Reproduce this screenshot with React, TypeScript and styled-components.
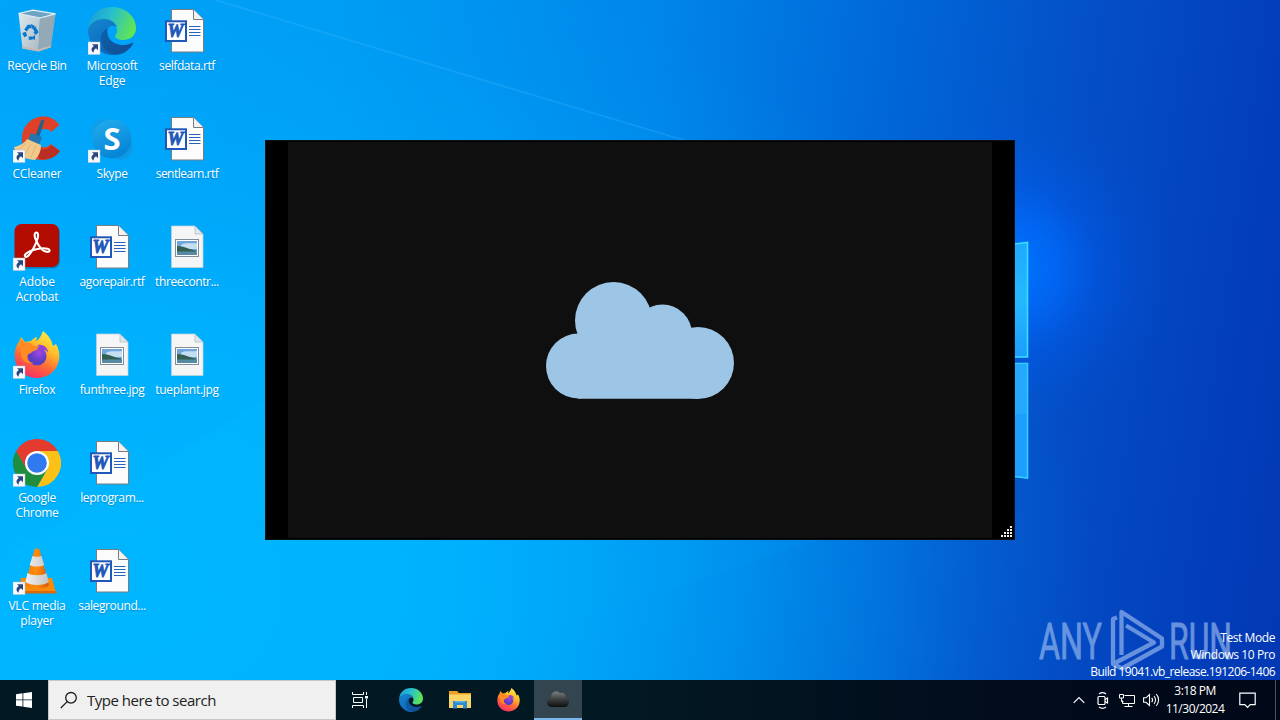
import type { ReactNode } from "react";
import styled, { createGlobalStyle } from "styled-components";

const GlobalStyle = createGlobalStyle`
  * {
    box-sizing: border-box;
  }
  body {
    margin: 0;
    overflow: hidden;
    font-family: "Open Sans", "Noto Sans", sans-serif;
  }
  svg {
    display: block;
    flex-shrink: 0;
  }
`;

const Screen = styled.div`
  position: relative;
  width: 1280px;
  height: 720px;
  display: flex;
  flex-direction: column;
  overflow: hidden;
`;

const Desktop = styled.main`
  position: relative;
  flex: 1;
  background:
    radial-gradient(
      ellipse 165px 165px at 1010px 268px,
      rgba(0, 118, 255, 1) 0%,
      rgba(0, 108, 255, 0.75) 28%,
      rgba(0, 98, 250, 0.35) 52%,
      rgba(0, 92, 240, 0.1) 78%,
      rgba(0, 90, 240, 0) 100%
    ),
    radial-gradient(
      ellipse 980px 680px at 120px 590px,
      #00b7ff 0%,
      rgba(0, 181, 255, 0.92) 32%,
      rgba(0, 174, 252, 0.5) 62%,
      rgba(0, 165, 245, 0.14) 86%,
      rgba(0, 160, 240, 0) 100%
    ),
    linear-gradient(98deg, #00a4fa 0%, #009cf4 25%, #0086ea 48%, #0068d8 65%, #0450c8 79%, #0340bc 92%, #0338b4 100%);
`;

const Wallpaper = styled.svg`
  position: absolute;
  inset: 0;
`;

const IconGrid = styled.ul`
  position: relative;
  display: grid;
  grid-auto-flow: column;
  grid-template-rows: repeat(6, 108px);
  grid-auto-columns: 75px;
  margin: 0;
  padding: 0;
  width: 225px;
  list-style: none;
`;

const Shortcut = styled.li`
  display: flex;
  flex-direction: column;
  align-items: center;
  padding: 7px 1px 0 0;
`;

const Label = styled.span<{ $spacing: number }>`
  margin-top: 3px;
  font-size: 12px;
  line-height: 15px;
  letter-spacing: ${(props) => props.$spacing}px;
  color: #fff;
  text-align: center;
  white-space: pre;
  text-shadow: 0 1px 1px rgba(0, 60, 120, 0.35);
`;

const Window = styled.section`
  position: absolute;
  left: 265px;
  top: 140px;
  width: 750px;
  height: 400px;
  padding: 1px 22px;
  background: #000;
  border: 1px solid #0c1216;
`;

const WindowBody = styled.div`
  height: 100%;
  display: flex;
  align-items: center;
  justify-content: center;
  background: #0f0f0f;
`;

const Grip = styled.svg`
  position: absolute;
  right: 2px;
  bottom: 2px;
`;

const Watermark = styled.svg`
  position: absolute;
  left: 1036px;
  top: 600px;
`;

const BuildInfo = styled.div`
  position: absolute;
  right: 5px;
  bottom: 0;
  display: flex;
  flex-direction: column;
  align-items: flex-end;
  font-size: 12px;
  line-height: 17px;
  color: #fff;
  white-space: nowrap;
`;

const BuildLine = styled.span<{ $spacing: number }>`
  letter-spacing: ${(props) => props.$spacing}px;
`;

const Taskbar = styled.footer`
  height: 40px;
  display: flex;
  background: linear-gradient(90deg, #021822 0%, #021822 50%, #020c1c 78%, #010818 100%);
`;

const TaskButton = styled.div<{ $active?: boolean; $width: number }>`
  width: ${(props) => props.$width}px;
  height: 40px;
  display: flex;
  align-items: center;
  justify-content: center;
  background: ${(props) => (props.$active ? "#33464f" : "transparent")};
  border-bottom: ${(props) => (props.$active ? "2px solid #79b8ec" : "0")};
`;

const SearchBox = styled.div`
  width: 288px;
  height: 40px;
  display: flex;
  align-items: center;
  gap: 9px;
  padding-left: 11px;
  background: #f0f0f0;
  border: 1px solid #c4c8ca;
  color: #222;
  font-size: 15px;
  letter-spacing: -0.48px;
`;

const Tray = styled.div`
  margin-left: auto;
  display: flex;
  align-items: center;
  color: #fff;
`;

const TrayItem = styled.div`
  width: 24px;
  display: flex;
  justify-content: center;
`;

const Clock = styled.div`
  width: 64px;
  display: flex;
  flex-direction: column;
  align-items: center;
  font-size: 12px;
  line-height: 18px;
  letter-spacing: -0.5px;
  white-space: nowrap;
`;

const Notifications = styled.div`
  width: 49px;
  height: 40px;
  display: flex;
  align-items: center;
  justify-content: center;
  padding-right: 8px;
  border-right: 1px solid #4a5261;
  margin-right: 4px;
`;

const ShortcutArrow = () => (
  <g>
    <rect x="0" y="35" width="12" height="12.5" fill="#f6f8fb" stroke="#b5c3d3" strokeWidth=".5" />
    <path d="M4 37.2h6v6l-2-2c-1.9 1.2-2.6 2.5-2.3 4.6-2.9-1.9-3-4.8.2-6.8z" fill="#28477f" />
  </g>
);

const Icon = ({ children, arrow }: { children: ReactNode; arrow?: boolean }) => (
  <svg width="48" height="48" viewBox="0 0 48 48">
    {children}
    {arrow && <ShortcutArrow />}
  </svg>
);

const RecycleBin = () => (
  <Icon>
    <defs>
      <linearGradient id="bin" x1="0" y1="0" x2="1" y2="1">
        <stop offset="0" stopColor="#dce8ef" />
        <stop offset="1" stopColor="#aeb9c1" />
      </linearGradient>
    </defs>
    <path d="M5.5 6.5 27 11l-1.5 33.500L9.500 41.500z" fill="url(#bin)" />
    <path d="M27 11 42.5 7 38 40l-12.500 4.500z" fill="#93a9b6" />
    <path d="M5.500 6.500 20 3.200l22.500 3.600L27 11z" fill="#6fa3c4" stroke="#e8f2f6" strokeWidth="1.200" />
    <path d="M9.300 39.500l16 2.700L38 38.500 37.800 40.500l-12.300 4-16-3z" fill="#c5b8b2" />
    <g fill="none" stroke="#0878cd" strokeWidth="3.300">
      <path d="M12.500 23.500l3-4h3M20.800 20.200l2.800 4.800-2 1.800M19.500 31.200h-3.800M12.800 29.500l-2.100-3.800" />
    </g>
    <path d="M18 17l4 2-3 3zM22 28l-4 3 4 2zM9 26l4-1 1 4z" fill="#0878cd" />
  </Icon>
);

const EdgeArt = ({ id }: { id: string }) => (
  <>
    <defs>
      <linearGradient id={`${id}a`} x1="0" y1=".2" x2="1" y2=".5">
        <stop offset="0" stopColor="#199bd9" />
        <stop offset=".45" stopColor="#27bfce" />
        <stop offset="1" stopColor="#62e552" />
      </linearGradient>
      <linearGradient id={`${id}b`} x1="0" y1="0" x2=".5" y2="1">
        <stop offset="0" stopColor="#1685cd" />
        <stop offset="1" stopColor="#0b69bd" />
      </linearGradient>
      <linearGradient id={`${id}c`} x1="0" y1="0" x2="1" y2="1">
        <stop offset="0" stopColor="#0c62ae" />
        <stop offset="1" stopColor="#124c91" />
      </linearGradient>
    </defs>
    <path
      d="M0 23C1 9 10 0 24 0c14 0 24 10 24 21 0 7-5 12-13 12-5 0-8-2-8-4 0-1 2-2 2-6 0-5-5-10-13-10C8 13 2 16 0 23z"
      fill={`url(#${id}a)`}
    />
    <path
      d="M0 23c2-7 8-11 16-11 6 0 11 3 13 8-5-3-11 0-12 8-1 9 5 17 14 20-3 .6-7 .4-10-.2C9 45 0 36 0 23z"
      fill={`url(#${id}b)`}
    />
    <path
      d="M20 21c-5 2-8 7-7 13 1 8 8 14 17 13.500C37 46.500 42 42 45 37c.6-1-.3-1.600-1.300-1C36 40 25 38 21 31c-2-4-2-7-1-10z"
      fill={`url(#${id}c)`}
    />
  </>
);

const CCleaner = () => (
  <Icon arrow>
    <path
      d="M46.500 10C42 4 37 1.500 31 1.500 18 1.500 9 11 9 24c0 12 9 21 20 21 7 0 14-3 18-9l-9-7c-3 3-6 4-9 3-4-1-6-4-6-8 0-6 4-10 9-10 3 0 5 1 6 3z"
      fill="#df4128"
    />
    <path d="M23 39l6-5c4 1 7-.5 9-4l9 6c-5 7-12 9-20 8z" fill="#b92f24" />
    <path d="M28.500 4.500l3 1-5.500 17-4-1z" fill="#26618c" />
    <path d="M18 18l11 4-3 8-11-5z" fill="#2676ae" />
    <path d="M14 24c-2 4-8 7-13 8 2 8 10 12 21 13 4-4 6-9 6-15z" fill="#f1c98a" />
    <path d="M13 28l-7 7M18 29l-6 10M23 31l-5 11" stroke="#dfb478" strokeWidth="1" />
  </Icon>
);

const Skype = () => (
  <Icon arrow>
    <defs>
      <linearGradient id="skype" x1="0" y1="0" x2=".4" y2="1">
        <stop offset="0" stopColor="#22aeee" />
        <stop offset="1" stopColor="#0785d6" />
      </linearGradient>
    </defs>
    <circle cx="15" cy="16" r="12" fill="#0f9fe8" />
    <circle cx="33" cy="33" r="11.500" fill="#0c99e6" />
    <circle cx="24" cy="24" r="19.500" fill="url(#skype)" />
    <text x="24" y="35" textAnchor="middle" fontFamily="Open Sans, sans-serif" fontWeight="700" fontSize="31" fill="#fff">
      S
    </text>
  </Icon>
);

const Acrobat = () => (
  <Icon arrow>
    <rect x="2" y="2.500" width="45" height="43" rx="7" fill="#17618f" opacity=".6" />
    <rect x="1.500" y="1" width="44.500" height="43" rx="7" fill="#b30b00" />
    <path
      d="M23.500 9.500c-2.600 0-2.300 4.200-.2 8.500 2.500 5.200 6.300 10.200 10.300 10.800 3.600.5 4-2.300.8-3.100-5.600-1.300-16.600 1.200-21 4.600-3 2.400-.9 5 1.600 2.600 4-4 8.500-12.500 9.800-18.400.5-2.700.3-5-1.300-5z"
      fill="none"
      stroke="#fff"
      strokeWidth="2.100"
    />
  </Icon>
);

const FirefoxArt = ({ id }: { id: string }) => (
  <>
    <defs>
      <linearGradient id={`${id}a`} x1=".8" y1="0" x2=".3" y2="1">
        <stop offset="0" stopColor="#fff04b" />
        <stop offset=".35" stopColor="#ffbd2a" />
        <stop offset=".65" stopColor="#ff6b35" />
        <stop offset="1" stopColor="#f52a69" />
      </linearGradient>
      <radialGradient id={`${id}b`} cx=".6" cy=".3">
        <stop offset="0" stopColor="#a545e2" />
        <stop offset="1" stopColor="#5a3ec5" />
      </radialGradient>
    </defs>
    <path
      d="M30 0c7 5 9 11 10 15l3-2c3 5 4 10 3 16-2 11-11 18-22 18S3 39 2 28C1 21 3 14 6 11l2-5 4 5 6-1c2-2 4-4 6-4l-1 4c3-1 5-5 7-10z"
      fill={`url(#${id}a)`}
    />
    <circle cx="24" cy="25" r="9.500" fill={`url(#${id}b)`} />
    <path d="M8 8l4 4c3-.5 6 0 8 2 2 1 5 1 5 3s-5 3-6 4c-1 2-4 1-5 4-.5 4 3 7 7 7-8 2-13-3-13-9 0-6-3-9 0-15z" fill="#ff8b22" />
    <path d="M24 14c6-1 11 2 11 8-2-3-4-4-7-4-1-2-2-3-4-4z" fill="#9641d6" />
  </>
);

const Chrome = () => (
  <Icon arrow>
    <path d="M24 24 3.200 12A24 24 0 0 1 44.800 12z" fill="#e33b2e" />
    <path d="M24 24V12h20.800A24 24 0 0 1 24 48l10.400-18z" fill="#fbc116" />
    <path d="M24 24l10.400 6L24 48A24 24 0 0 1 3.200 12l10.400 18z" fill="#1e8e3e" />
    <path d="M3.200 12h20.800v12l-10.400 6z" fill="#e33b2e" />
    <circle cx="24" cy="24" r="12" fill="#fff" />
    <circle cx="24" cy="24" r="9.800" fill="#3079ee" />
  </Icon>
);

const Vlc = () => (
  <Icon arrow>
    <defs>
      <linearGradient id="cone">
        <stop offset="0" stopColor="#f77e0a" />
        <stop offset=".5" stopColor="#ff8b0b" />
        <stop offset="1" stopColor="#d35a04" />
      </linearGradient>
      <linearGradient id="band">
        <stop offset="0" stopColor="#f4f2f0" />
        <stop offset="1" stopColor="#c3c3c3" />
      </linearGradient>
    </defs>
    <path d="M8 31h31l4 15H6z" fill="#f98a0a" />
    <path d="M6 44h37.500v2.500H6z" fill="#dc6906" />
    <path d="M21.500 2.500c1-1.500 4-1.500 5 0L36 38c-4 5-20 5-24 0z" fill="url(#cone)" />
    <path d="M19.500 9c2 1 7 1 9 0l2.700 9c-3 2-11 2-14.500 0zM14.500 26c4 3 15 3 19 0l2.300 9c-5 4-18 4-23.500 0z" fill="url(#band)" />
  </Icon>
);

const WordFile = () => (
  <Icon>
    <path d="M8.500 2.500h22l10 10v32.500h-32z" fill="#fcfcfc" stroke="#777d82" />
    <path d="M30.500 2.500v10h10" fill="#f2f2f2" stroke="#777d82" />
    <path d="M26 19.500h11.500M26 22.500h11.500M26 25.500h11.500M26 28.500h11.500" stroke="#2a62b7" />
    <rect x="3" y="14.300" width="20" height="19.700" fill="#fff" stroke="#1f58b8" strokeWidth="2" />
    <text
      x="12.600"
      y="30.300"
      textAnchor="middle"
      fontFamily="Liberation Serif, serif"
      fontStyle="italic"
      fontWeight="700"
      fontSize="18"
      fill="#1f58b8"
      stroke="#1f58b8"
      strokeWidth=".9"
    >
      W
    </text>
  </Icon>
);

const ImageFile = () => (
  <Icon>
    <path d="M8.500 3h23.500l8 8v33.500h-31.500z" fill="#f5f5f5" stroke="#c9d1d6" strokeWidth=".7" />
    <path d="M32 3v8h8z" fill="#dce6eb" stroke="#aab9c2" strokeWidth=".7" />
    <rect x="12.500" y="16.500" width="23" height="17" fill="#fff" stroke="#7f8e98" />
    <rect x="14" y="18" width="20" height="14" fill="#6ea6dd" />
    <path d="M18 22c4-3 10-1 16-2v6H18z" fill="#c4def2" />
    <path d="M14 23c7 0 11 3 19 4.500V29H14z" fill="#335f52" />
    <path d="M14 28.500h20V32H14z" fill="#578aa3" />
  </Icon>
);

const Edge = () => (
  <Icon arrow>
    <EdgeArt id="edge" />
  </Icon>
);

const Firefox = () => (
  <Icon arrow>
    <FirefoxArt id="firefox" />
  </Icon>
);

interface IShortcut {
  label: string;
  icon: () => ReactNode;
  spacing: number;
}

const shortcuts: IShortcut[] = [
  { label: "Recycle Bin", icon: RecycleBin, spacing: -0.3 },
  { label: "CCleaner", icon: CCleaner, spacing: -0.2 },
  { label: "Adobe\nAcrobat", icon: Acrobat, spacing: -0.15 },
  { label: "Firefox", icon: Firefox, spacing: -0.3 },
  { label: "Google\nChrome", icon: Chrome, spacing: -0.3 },
  { label: "VLC media\nplayer", icon: Vlc, spacing: -0.2 },
  { label: "Microsoft\nEdge", icon: Edge, spacing: -0.2 },
  { label: "Skype", icon: Skype, spacing: -0.4 },
  { label: "agorepair.rtf", icon: WordFile, spacing: -0.42 },
  { label: "funthree.jpg", icon: ImageFile, spacing: -0.35 },
  { label: "leprogram...", icon: WordFile, spacing: -0.35 },
  { label: "saleground...", icon: WordFile, spacing: -0.38 },
  { label: "selfdata.rtf", icon: WordFile, spacing: -0.42 },
  { label: "sentlearn.rtf", icon: WordFile, spacing: -0.5 },
  { label: "threecontr...", icon: ImageFile, spacing: -0.4 },
  { label: "tueplant.jpg", icon: ImageFile, spacing: -0.3 },
];

const gripDots = [0, 1, 2, 3].flatMap((row) =>
  [0, 1, 2, 3].filter((col) => col >= 3 - row).map((col) => ({ x: col * 3, y: row * 3 }))
);

function App() {
  return (
    <Screen>
      <GlobalStyle />
      <Desktop>
        <Wallpaper width="1280" height="680" viewBox="0 0 1280 680">
          <defs>
            <linearGradient id="pane" x1="0" y1="0" x2="0" y2="1">
              <stop offset="0" stopColor="#1fa9ff" />
              <stop offset=".5" stopColor="#24b8ff" />
              <stop offset="1" stopColor="#1c9dff" />
            </linearGradient>
          </defs>
          <path d="M205 0 690 143H265V400L0 560V0z" fill="#00aaff" opacity=".08" />
          <path d="M215 0 690 142" stroke="#35b5ff" strokeWidth="1.800" opacity=".35" />
          <path d="M0 546 265 512" stroke="#30c4ff" opacity=".12" />
          <path d="M820 540 640 600 400 680H0V560L265 520V540z" fill="#00b4ff" opacity=".08" />
          <path d="M1000 245.500 1027.500 242.500V357H1000z" fill="url(#pane)" stroke="#3adfff" strokeWidth="1.600" />
          <path d="M1000 363.500h27.500V478l-27.500-3z" fill="#1d9dff" stroke="#37cfff" strokeWidth="1.600" />
          <path d="M1000 416l26.500-2v-49H1000z" fill="#28b2ff" opacity=".6" />
        </Wallpaper>
        <IconGrid>
          {shortcuts.map(({ label, icon: Art, spacing }) => (
            <Shortcut key={label}>
              <Art />
              <Label $spacing={spacing}>{label}</Label>
            </Shortcut>
          ))}
        </IconGrid>
        <Watermark width="244" height="80" viewBox="1036 600 244 80">
          <g
            fill="#9dbcf0"
            stroke="#9dbcf0"
            strokeWidth=".9"
            opacity=".65"
            fontFamily="Roboto, sans-serif"
            fontSize="50"
          >
            <text x="1039" y="659" textLength="63" lengthAdjust="spacingAndGlyphs">
              ANY
            </text>
            <text x="1169" y="659" textLength="63" lengthAdjust="spacingAndGlyphs">
              RUN
            </text>
          </g>
          <g fill="none" stroke="#9dbcf0" strokeWidth="4.300" opacity=".65" strokeLinejoin="round">
            <path d="M1117 617.500l-4 1.500v45l9 4.500 40-22v-8L1121.500 612v43" />
            <path d="M1126 625.500 1154 642.500 1115 663" />
          </g>
        </Watermark>
        <BuildInfo>
          <BuildLine $spacing={-0.42}>Test Mode</BuildLine>
          <BuildLine $spacing={-0.42}>Windows 10 Pro</BuildLine>
          <BuildLine $spacing={-0.56}>Build 19041.vb_release.191206-1406</BuildLine>
        </BuildInfo>
        <Window>
          <WindowBody>
            <svg width="190" height="118" viewBox="545 281 190 118">
              <g fill="#9dc6e6">
                <circle cx="578.500" cy="366" r="32.500" />
                <circle cx="613.500" cy="320.500" r="38.500" />
                <circle cx="662.500" cy="334" r="29.500" />
                <circle cx="698" cy="363" r="36" />
                <path d="M578 335l40-15h44l36 30v48.700H578z" />
              </g>
            </svg>
          </WindowBody>
          <Grip width="11" height="11" viewBox="0 0 11 11">
            {gripDots.map(({ x, y }) => (
              <rect key={`${x}-${y}`} x={x} y={y} width="2" height="2" fill="#f0f0ea" />
            ))}
          </Grip>
        </Window>
      </Desktop>
      <Taskbar>
        <TaskButton $width={48}>
          <svg width="16" height="16" viewBox="0 0 16 16" fill="#fff">
            <path d="M0 2.300 6.500 1.300v6.200H0zM7.300 1.200 16 0v7.500H7.300zM0 8.300h6.500v6.300L0 13.700zM7.300 8.300H16V16l-8.700-1.200z" />
          </svg>
        </TaskButton>
        <SearchBox>
          <svg width="18" height="18" viewBox="0 0 18 18" fill="none" stroke="#1c1c1c" strokeWidth="1.300">
            <circle cx="11" cy="6.800" r="5.300" />
            <path d="M7.200 10.600.8 17" />
          </svg>
          Type here to search
        </SearchBox>
        <TaskButton $width={48}>
          <svg width="17" height="16" viewBox="0 0 17 16" fill="none" stroke="#fff">
            <path d="M.5 0v2.500h11V0M.5 16v-2.500h11V16M1.500 5.500h9v5h-9zM14.500 0v3M14.500 7v9" />
            <path d="M13 4h3v2.500h-3z" fill="#fff" stroke="none" />
          </svg>
        </TaskButton>
        <TaskButton $width={54}>
          <svg width="24" height="24" viewBox="0 0 48 48">
            <EdgeArt id="edgeTask" />
          </svg>
        </TaskButton>
        <TaskButton $width={44}>
          <svg width="22" height="20" viewBox="0 0 22 20">
            <path d="M0 1h8l2 2h12v15H0z" fill="#e9a21f" />
            <path d="M0 4.500h22V18H0z" fill="#fcd569" />
            <path d="M4 18.500v-7.500h14v7.500h-4V15H8v3.500z" fill="#2f8bd0" />
            <path d="M6 11h10v1.500H6z" fill="#58b3e8" />
          </svg>
        </TaskButton>
        <TaskButton $width={52}>
          <svg width="24" height="24" viewBox="-1 0 48 48">
            <FirefoxArt id="firefoxTask" />
          </svg>
        </TaskButton>
        <TaskButton $active $width={48}>
          <svg width="22" height="18" viewBox="0 0 22 18">
            <defs>
              <linearGradient id="cloudApp" x1="0" y1="0" x2="0" y2="1">
                <stop offset="0" stopColor="#7b7f81" />
                <stop offset=".45" stopColor="#434546" />
                <stop offset="1" stopColor="#0d0e0f" />
              </linearGradient>
            </defs>
            <path
              d="M5 17C1.500 17 0 14.500 0 12s1.500-4 4-4.500C4 4 6 1.500 9 1.500c2 0 3 .6 4 1.500 3-1 6 1 6 4.500 2 1 3 2.500 3 4.500 0 3-2 5-5 5z"
              fill="url(#cloudApp)"
            />
          </svg>
        </TaskButton>
        <Tray>
          <TrayItem>
            <svg width="12" height="8" viewBox="0 0 12 8" fill="none" stroke="currentColor" strokeWidth="1.200">
              <path d="M.7 6.800 6 1.500l5.300 5.300" />
            </svg>
          </TrayItem>
          <TrayItem>
            <svg width="14" height="17" viewBox="0 0 14 17" fill="none" stroke="currentColor" strokeWidth="1.200">
              <rect x="2" y="4.500" width="7" height="8" rx="1" />
              <path d="M9 7.500l2.500-1.500v5L9 9.500M3 2c2-1.500 5-1.500 7 0M3 15c2 1.500 5 1.500 7 0" />
            </svg>
          </TrayItem>
          <TrayItem>
            <svg width="17" height="15" viewBox="0 0 17 15" fill="none" stroke="currentColor">
              <path d="M5.500 2.500h10v8h-12v-3M5.500 13.500h8M9.500 10.500v3" />
              <path d="M.5 1.500h4v3.500h-4zM2.500 5v3.500h2" />
            </svg>
          </TrayItem>
          <TrayItem>
            <svg width="17" height="14" viewBox="0 0 17 14" fill="none" stroke="currentColor" strokeWidth="1.100">
              <path d="M.6 4.800h2.400L6.500 1.500v11L3 9.300H.6z" />
              <path d="M8.700 4.800c1 1.200 1 3.200 0 4.400M11 3c2 2.200 2 5.800 0 8M13.300 1.200c3 3.200 3 8.400 0 11.600" />
            </svg>
          </TrayItem>
          <Clock>
            <span>3:18 PM</span>
            <span>11/30/2024</span>
          </Clock>
          <Notifications>
            <svg width="17" height="17" viewBox="0 0 17 17" fill="none" stroke="currentColor" strokeWidth="1.200">
              <path d="M.8 1.200h15.400v11.500h-5L8.500 15.500l-2.700-2.800h-5z" />
            </svg>
          </Notifications>
        </Tray>
      </Taskbar>
    </Screen>
  );
}

export default App;
